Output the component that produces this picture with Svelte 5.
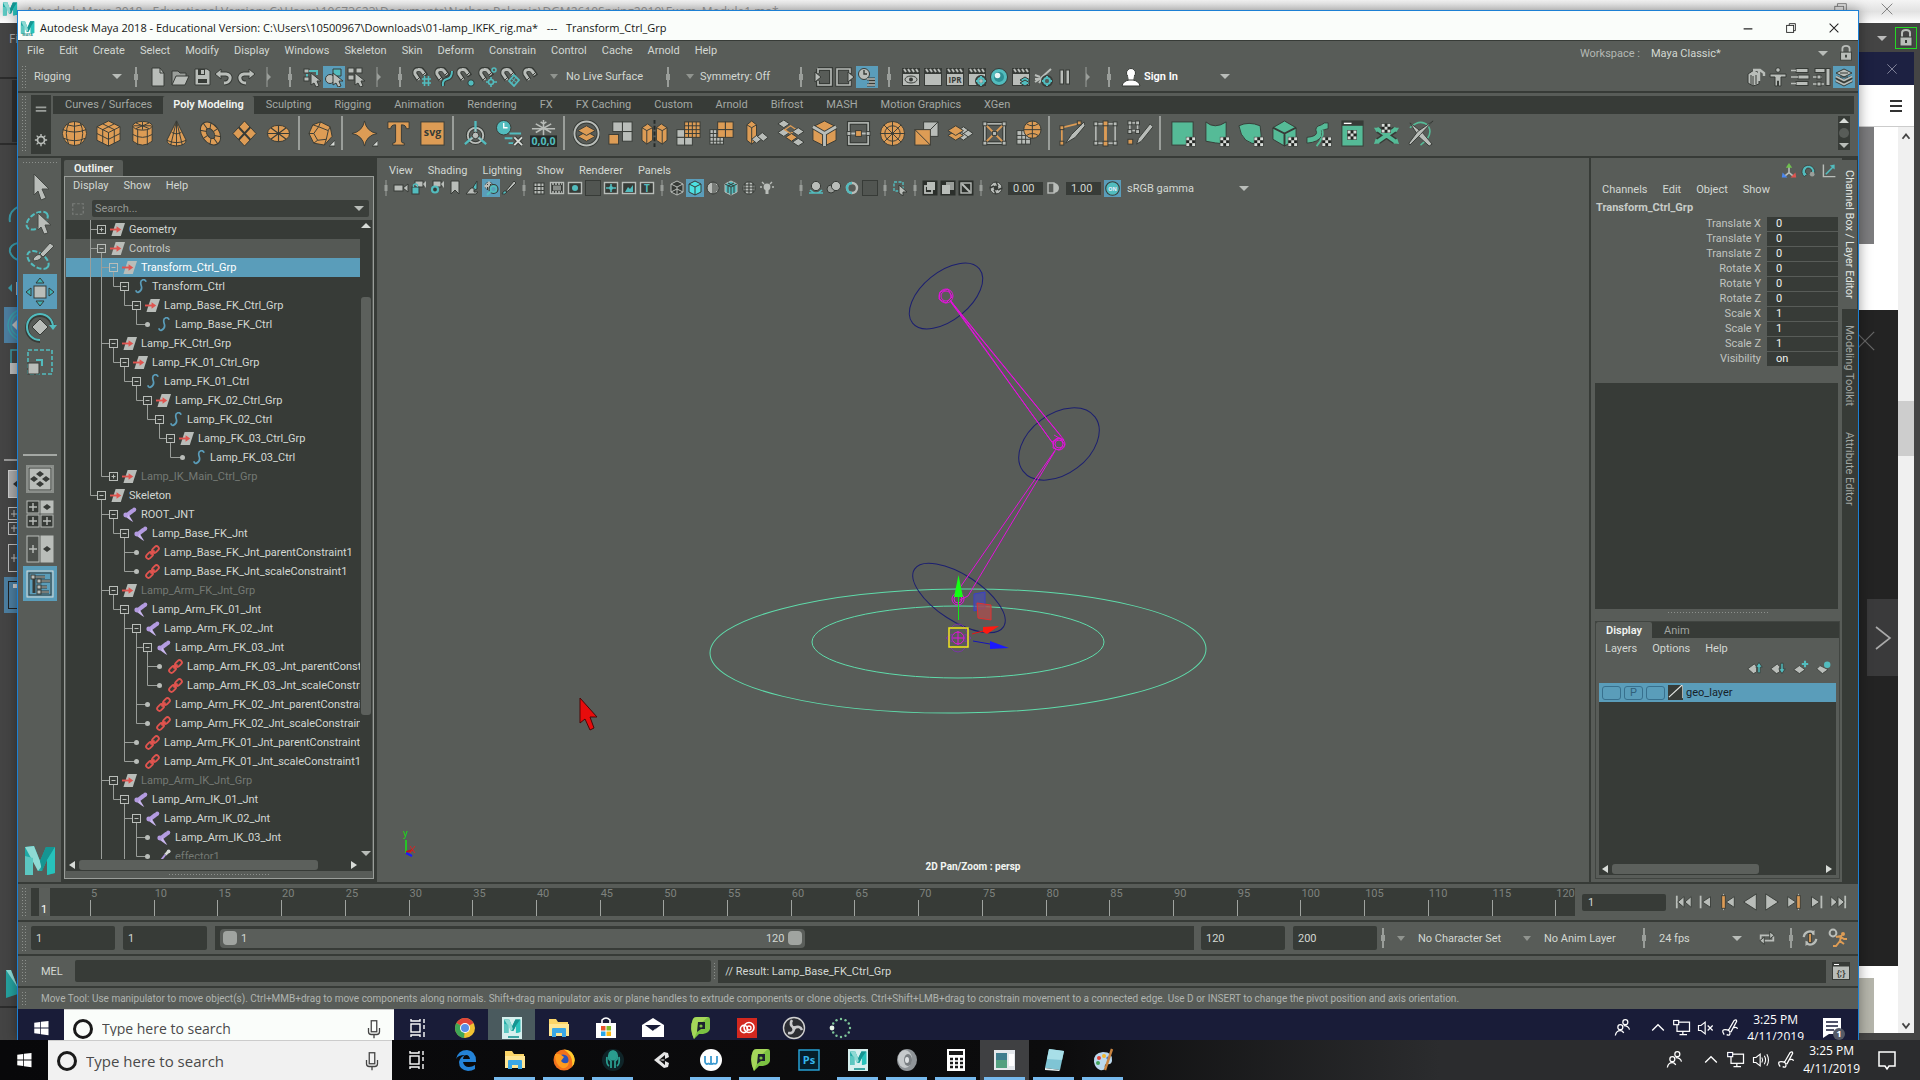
<script>
  const G = '#b9bdb9', T = '#52bcbe', O = '#dd9c55', D = '#373b37', M = '#9a9e9a', U = '#55bb97', B = '#5a9dba', R = '#e0544f';

  const p = (d, f = 'none', s = 'none', w = 1) => `<path d="${d}" fill="${f}" stroke="${s}" stroke-width="${w}"/>`;
  const c = (x, y, r, f = 'none', s = 'none', w = 1) => `<circle cx="${x}" cy="${y}" r="${r}" fill="${f}" stroke="${s}" stroke-width="${w}"/>`;
  const e = (x, y, a, b, f = 'none', s = 'none', w = 1) => `<ellipse cx="${x}" cy="${y}" rx="${a}" ry="${b}" fill="${f}" stroke="${s}" stroke-width="${w}"/>`;
  const r = (x, y, w, h, f = 'none', s = 'none', sw = 1) => `<rect x="${x}" y="${y}" width="${w}" height="${h}" fill="${f}" stroke="${s}" stroke-width="${sw}"/>`;
  const t = (x, y, size, f, txt) => `<text x="${x}" y="${y}" font-size="${size}" fill="${f}" font-weight="700" text-anchor="middle" font-family="Open Sans, sans-serif">${txt}</text>`;

  const magnet = p('M7 13L3 7Q2 2 7 2Q9 2 10 3L14 9', 'none', D, 5) + p('M7 13L3 7Q2 3 6 2.5Q9 2 10 4L13 8', 'none', G, 3) + p('M11 8L14 5M5 13L8 10', 'none', D, 1);
  const pointer = p('M9 6L19 14H15L17 19L14 20L12 16L9 18Z', G, D);
  const clap = r(1.5, 6.5, 17, 12, G, D) + r(1.5, 1.5, 17, 5, D, D) + p('M3 2L5 5M7 2L9 5M11 2L13 5M15 2L17 5', 'none', G, 2);
  const gear = (x, y, q) => c(x, y, q + 1, 'none', D, 4) + c(x, y, q, 'none', T, 2) + p(`M${x} ${y - q - 2}V${y - q}M${x} ${y + q}V${y + q + 2}M${x - q - 2} ${y}H${x - q}M${x + q} ${y}H${x + q + 2}`, 'none', T, 2);

  /* 20-unit icons of the status line */
  const status = {
    sep: p('M10 0V20', 'none', M, 2) + r(8, 7, 4, 6, M),
    end: p('M9 0V20', 'none', M, 1) + p('M9 6L13 10L9 14Z', M),
    file: p('M4 1H12L16 6V19H4Z', G, D) + p('M12 1V6H16', 'none', D),
    open: p('M2 18V4H8L10 6H16V9', M, D) + p('M2 18L6 9H19L15 18Z', G, D),
    save: p('M3 2H15L18 4V18H3Z', G, D) + r(6, 2, 7, 6, D) + r(9, 3, 3, 4, G) + r(6, 12, 9, 4, D),
    undo: p('M4 7H12Q17 8 16 12Q15 16 10 16', 'none', D, 5) + p('M7 2V12L1 7Z', G, D) + p('M5 7H12Q17 8 16 12Q15 16 10 16', 'none', G, 3),
    redo: p('M16 7H8Q3 8 4 12Q5 16 10 16', 'none', D, 5) + p('M13 2V12L19 7Z', G, D) + p('M15 7H8Q3 8 4 12Q5 16 10 16', 'none', G, 3),
    selH: r(2, 2, 5, 4, G, D) + p('M7 4H15V8M5 7V12', 'none', T, 2) + r(2, 10, 5, 4, G, D) + pointer,
    selO: p('M9 2H17V9H9Z', T, D) + c(6, 12, 4.5, G, D) + pointer,
    selC: r(2, 1, 6, 5, G, D) + r(10, 1, 6, 5, G, D) + r(2, 8, 6, 5, G, D) + pointer,
    mGrid: magnet + p('M10 12H19M10 16H19M12.5 9V19M16.5 9V19', 'none', T, 1.6),
    mCurve: magnet + p('M9 19Q8 13 13 12Q18 11 18 4', 'none', D, 4) + p('M9 19Q8 13 13 12Q18 11 18 4', 'none', T, 2),
    mPoint: magnet + c(15, 16, 3.2, T, D),
    mProj: magnet + c(16, 3, 2, 'none', T, 1.5) + c(13, 15, 2.5, 'none', T, 1.6) + p('M13 10V12M13 18V20M8 15H10M16 15H19', 'none', T, 1.6),
    mPlane: magnet + p('M9 14L14 8L19 13L14 19Z', 'none', T, 1.8) + p('M11 11L17 16M16 10L11 17', 'none', T, 1),
    mLive: magnet,
    in: p('M5 2H18V18H5V14M5 2V6', 'none', D, 4) + p('M5 6V2H18V18H5V14', 'none', G, 1.6) + p('M2 5V15L8 10Z', G, D),
    out: p('M2 2H15V18H2Z', 'none', D, 3.4) + p('M15 6V2H2V18H15V14', 'none', G, 1.6) + p('M13 5V15L19 10Z', G, D),
    hist: c(7, 7, 5.5, G, D) + p('M7 3V7H10', 'none', D, 1.4) + p('M10 12H18M12 15H18M10 18H18', 'none', D, 3) + p('M10 12H18M12 15H18M10 18H18', 'none', G, 1.5),
    rEye: clap + e(10, 12.5, 6, 3.5, G, D) + c(10, 12.5, 2, D),
    rPic: clap,
    rIpr: clap + t(10, 16, 8, D, 'IPR'),
    rSet: clap + gear(14, 14, 3),
    rHyp: c(10, 10, 8.5, T, D) + c(10, 10, 5, '#2e8f94') + c(8.5, 8.5, 2.8, '#e6f4f4'),
    rLayer: clap + p('M9 13L14 10L19 13L14 16Z', T, D) + p('M9 16L14 13L19 16L14 19Z', T, D),
    rLight: p('M2 15L8 11L18 2M2 8L7 10M6 16L9 12M2 12H7', 'none', G, 2) + gear(14, 14, 3),
    pause: r(5, 3, 3.5, 14, G, D) + r(11, 3, 3.5, 14, G, D),
    user: c(10, 6, 4.5, '#fff', D) + p('M7 9H13L12 14H8Z', '#fff') + p('M1 19Q2 14 8 13H12Q18 14 19 19Z', '#fff', D),
    wModel: p('M2 7L8 3L13 6V17L7 19L2 16Z', G, D) + p('M7 9V19M5 8V18M10 8V17', 'none', D) + p('M7 3H14L18 6V9M13 4V14', 'none', G, 2.4),
    wHuman: c(10, 3, 2.3, G, D) + p('M2 7H18V10H13V19H10.5V14H9.5V19H7V10H2Z', G, D),
    wChar: r(6, 1.5, 12, 4, G, D) + r(8, 8, 11, 4, G, D) + r(6, 14.5, 12, 4, G, D) + p('M1 3.5H6M1 10H8M1 16.5H6', 'none', G, 1.5),
    wTool: r(3, 1.5, 10, 4, G, D) + r(14, 1.5, 4, 17, G, D) + p('M1 10H10M1 17H12', 'none', G, 1.6) + r(5, 8, 4, 4, G, D) + r(5, 15, 4, 4, G, D),
    wLayer: p('M2 6L10 2L18 6L10 10Z', G, D) + p('M2 10L10 14L18 10M2 13.5L10 17.5L18 13.5', 'none', D, 3.4) + p('M2 9.5L10 13.5L18 9.5M2 13.5L10 17.5L18 13.5', 'none', G, 1.8) + p('M6 6H14M6 10H14', 'none', D, 1),
    lock: p('M6 9V5Q6 2 10 2Q14 2 14 5V9', 'none', G, 2) + r(4, 9, 12, 9, G, D) + p('M10 12V15', 'none', D, 2)
  };

  const checker = (x, y) => r(x, y, 9, 9, '#1f221f', D) + [[0, 0], [6, 0], [3, 3], [0, 6], [6, 6]].map(([a, b]) => r(x + a, y + b, 3, 3, '#d8dcd8')).join('');
  const fly = p('M28 21V27H22Z', '#d8dcd8', D);
  /* 28-unit icons of the shelf */
  const shelf = {
    sphere: c(14, 14, 12.5, O, D) + p('M14 1.5V26.5M2 10Q14 15 26 10M3 19Q14 24 25 19M8 3Q3 14 8 25M20 3Q25 14 20 25M6 5Q14 8 22 5', 'none', D),
    cube: p('M14 1L26 7V21L14 27L2 21V7Z', O, D) + p('M2 7L14 13L26 7M14 13V27M8 4L20 10V24M20 4L8 10V24M2 14L14 20L26 14', 'none', D),
    cylinder: p('M4 6V22Q14 30 24 22V6', O, D) + e(14, 6, 10, 4.5, O, D) + p('M4 15Q14 21 24 15M9 10V26M19 10V26M14 2V10M5 6H23M7 3L21 9M21 3L7 9', 'none', D),
    cone: p('M14 1L24 21Q24 26 14 27Q4 26 4 21Z', O, D) + p('M14 1V27M14 1L8 26M14 1L20 26M9 13Q14 16 19 13M4 21Q14 26 24 21', 'none', D),
    torus: `<g transform="rotate(55 14 14)">${e(14, 14, 13, 9, O, D)}${e(14, 14, 6, 3.5, '#585c58', D)}${p('M14 5V10M14 18V23M1 14H8M20 14H27M5 7L10 12M23 7L18 12M5 21L10 16M23 21L18 16', 'none', D)}</g>`,
    plane: p('M14 1L26 14L14 27L2 14Z', O, D) + p('M8 7.5L20 20.5M20 7.5L8 20.5', 'none', D, 2),
    disc: e(14, 14, 11.5, 8.5, O, D) + p('M14 5.5V22.5M2.5 14H25.5M6 8L22 20M22 8L6 20', 'none', D, 1.2),
    platonic: p('M13 2L23 7L25 17L17 26L6 24L1 14L5 5Z', O, D) + p('M13 2L11 7L5 5M11 7L6 14L1 14M6 14L10 21L6 24M10 21L19 20L17 26M19 20L21 11L23 7M21 11L11 7', 'none', D) + fly,
    star: p('M14 1Q16 12 27 14Q16 16 14 27Q12 16 1 14Q12 12 14 1Z', O, D) + fly,
    type: p('M3 2H25V9H22Q22 5 17 5V22Q17 24 20 24V26H8V24Q11 24 11 22V5Q6 5 6 9H3Z', O, D),
    svg: r(2, 2, 24, 24, O, D) + t(14, 17, 11, D, 'svg'),
    axis: c(14, 16, 8, 'none', D, 4) + c(14, 16, 8, 'none', G, 2) + p('M14 13V1M11 18L3 25M17 18L25 25', 'none', T, 2.4) + p('M14 9V16L8 21M14 16L20 21', 'none', G, 1.6) + c(14, 16, 3.4, G, D),
    clock: c(8, 8, 7.5, T, D) + p('M8 3V8H12', 'none', '#fff', 1.4) + p('M14 14H26M9 19H17M13 24H18', 'none', T, 2) + p('M19 18L27 26M27 18L19 26', 'none', D, 4) + p('M19 18L27 26M27 18L19 26', 'none', '#d8dcd8', 2),
    freeze: p('M14 0V16M6 4L22 13M22 4L6 13M2 9H26M11 2L14 4L17 2', 'none', G, 1.6) + r(0, 16, 28, 12, '#262a28') + t(14, 26, 11, T, '0,0,0'),
    combine: c(14, 14, 12.5, 'none', D, 4) + c(14, 14, 12.5, 'none', G, 2) + p('M5 17L14 12L23 17L14 22Z', O, D) + p('M5 11L14 6L23 11L14 16Z', O, D),
    separate: r(6, 2, 10, 10, G, D) + r(16, 2, 10, 10, G, D) + r(16, 12, 10, 10, G, D) + r(2, 15, 10, 10, O, D),
    mirror: p('M1 8L7 4L12 8V21L6 25L1 21Z', O, D) + p('M27 8L21 4L16 8V21L22 25L27 21Z', O, D) + p('M1 8L6 11L12 8M6 11V25M16 8L22 11L27 8M22 11V25', 'none', D) + `<path d="M14 0V28" stroke="#262a28" stroke-width="2" stroke-dasharray="4 2"/>`,
    smooth: r(2, 10, 8, 8, G, D) + r(2, 18, 8, 8, G, D) + r(10, 18, 8, 8, G, D) + r(10, 2, 16, 16, O, D) + p('M14 2V18M18 2V18M22 2V18M10 6H26M10 10H26M10 14H26', 'none', D),
    reduce: r(1, 10, 14, 15, G, D) + p('M4.5 10V25M8 10V25M11.5 10V25M1 14H15M1 18H15M1 22H15', 'none', D) + r(9, 2, 8, 8, O, D) + r(17, 2, 8, 8, O, D) + r(17, 10, 8, 8, O, D) + r(9, 10, 8, 8, O, D),
    extrude: p('M4 5L9 1L14 5V21L9 25L4 21Z', O, D) + p('M4 5L9 8L14 5M9 8V25', 'none', D) + p('M14 16L19 20L14 24L9 20Z', G, D) + p('M20 13L26 18L21 22L15 17Z', G, D),
    bridge: p('M7 0L13 4L7 8L1 4Z', G, D) + p('M7 9L13 13L7 17L1 13Z', G, D) + p('M14 6L20 10L14 14L8 10Z', 'none', O, 1.4) + p('M22 8L28 12L22 16L16 12Z', G, D) + p('M15 14L21 18L15 22L9 18Z', O, D) + p('M22 19L28 23L22 27L16 23Z', G, D),
    bevel: p('M14 1L26 7V21L14 27L2 21V7Z', O, D) + p('M2 7L14 14L26 7M14 14V27', 'none', D, 5) + p('M2 7L14 14L26 7M14 14V27', 'none', G, 3),
    target: r(4, 3, 20, 22, 'none', D, 4) + r(4, 3, 20, 22, 'none', G, 1.6) + p('M2 14H26', 'none', G, 2) + r(11, 11, 6, 6, O, D) + r(2, 12, 4, 4, G, D) + r(22, 12, 4, 4, G, D),
    circle: c(14, 14, 12.5, O, D) + c(14, 14, 8, 'none', D) + p('M14 1V27M1 14H27M5 5L23 23M23 5L5 23', 'none', D),
    fill: p('M11 2H26V17H11Z', G, D) + p('M26 2L11 17', 'none', D) + r(2, 10, 16, 16, O, D) + p('M2 10L18 26', 'none', D),
    poke: p('M17 7L27 14L17 21L7 14Z', G, D) + p('M12 10.5L22 17.5M22 10.5L12 17.5', 'none', D) + p('M9 11L17 16L9 21L1 16Z', O, D) + p('M9 6L17 11L9 16L1 11Z', O, D),
    lattice: r(4, 4, 20, 20, 'none', D, 4) + r(4, 4, 20, 20, 'none', G, 1.6) + p('M4 4L24 24M24 4L4 24', 'none', O, 2) + [[4, 4], [24, 4], [4, 24], [24, 24], [14, 14]].map(([x, y]) => r(x - 2, y - 2, 4, 4, G, D)).join(''),
    sculpt: r(2, 11, 14, 14, G, D) + p('M7 11V25M11 11V25M2 16H16M2 20H16', 'none', D) + c(18, 10, 9, O, D) + p('M18 1V19M9 10H27M12 4Q18 8 24 4M12 16Q18 12 24 16', 'none', D),
    knife: p('M4 25L4 8L24 3', 'none', O, 1.8) + p('M27 2L14 15L8 24L18 18L28 6Z', G, D) + r(2, 6, 4, 4, O, D) + r(2, 22, 4, 4, O, D) + r(20, 1, 4, 4, O, D),
    loop: r(4, 4, 20, 20, 'none', G, 1.6) + p('M14 2V26', 'none', O, 3) + [[4, 4], [24, 4], [4, 24], [24, 24]].map(([x, y]) => r(x - 2, y - 2, 4, 4, G, D)).join('') + r(11.5, 1, 5, 5, O, D) + r(11.5, 22, 5, 5, O, D),
    quad: r(4, 3, 8, 8, 'none', G, 1.6) + [[4, 3], [12, 3], [4, 12], [12, 12]].map(([x, y]) => r(x - 2, y - 2, 4, 4, G, D)).join('') + r(2, 20, 5, 5, O, D) + p('M25 4L28 7L16 22L11 25L13 19Z', G, D),
    uvA: r(3, 2, 22, 24, U, D) + checker(18, 18),
    uvB: p('M3 2Q12 10 24 2V25Q12 24 3 22Z', U, D) + checker(18, 18),
    uvC: p('M2 6Q12 1 24 6Q26 16 24 25Q5 26 2 6Z', U, D) + checker(18, 18),
    uvD: p('M14 1L26 8V20L14 27L2 20V8Z', U, D) + p('M2 8L14 14L26 8M14 14V27', 'none', D, 2) + checker(18, 18),
    uvE: p('M17 5Q9 7 12 13Q12 17 2 18V24Q14 23 17 17Q18 12 17 11Q20 10 24 9V3Q20 2 17 5Z', U, D) + p('M18 10Q20 18 12 27', 'none', U, 2) + checker(18, 18),
    uvF: r(3, 1, 22, 26, U, D) + r(3, 1, 22, 5, D) + p('M5 3.5H13', 'none', '#fff', 1.4) + checker(9, 11),
    uvG: p('M5 10L23 22M23 10L5 22', 'none', D, 7) + p('M4 9L24 23M24 9L4 23', 'none', U, 4) + p('M1 8L7 8L4 13ZM27 8L21 8L24 13ZM1 25L3 19L7 24ZM27 25L25 19L21 24Z', U) + checker(9, 4),
    uvH: p('M3 8Q14 -2 22 6Q28 16 14 26', 'none', U, 1.6) + p('M3 3L16 13L26 25L23 27L12 17Z', G, D) + p('M27 1L14 15L3 26L2 24L11 12Z', G, D)
  };
  const shelfGroups = [
    ['sphere', 'cube', 'cylinder', 'cone', 'torus', 'plane', 'disc'],
    ['platonic'],
    ['star', 'type', 'svg'],
    ['axis', 'clock', 'freeze'],
    ['combine', 'separate', 'mirror', 'smooth', 'reduce', 'extrude', 'bridge', 'bevel', 'target', 'circle', 'fill', 'poke', 'lattice', 'sculpt'],
    ['knife', 'loop', 'quad'],
    ['uvA', 'uvB', 'uvC', 'uvD', 'uvE', 'uvF', 'uvG', 'uvH']
  ];

  const cam = r(1, 5, 9, 6, G, D) + p('M10 8L15 4V12Z', G, D);
  const frame = r(1.5, 2.5, 13, 11, D, G, 1.4);
  /* 16-unit icons of the view panel */
  const panel = {
    sep: p('M8 0V16', 'none', M, 1) + r(6.5, 5, 3, 6, M),
    cam,
    camLock: r(4, 1, 8, 6, G, D) + p('M12 4L15 1V8Z', G) + r(1, 7, 7, 7, T, D) + p('M2.5 7V5Q4.5 3 6.5 5V7', 'none', T, 1.4),
    camGear: r(4, 1, 8, 6, G, D) + p('M12 4L15 1V8Z', G) + c(6, 9.5, 3, D, T, 2.2),
    mark: p('M4 1H12V14L8 10L4 14Z', G, D),
    image: p('M5 12L12 1V9Z', T, D) + p('M1 14L6 8H9V12H13L11 14Z', G, D),
    pan: p('M6 2V10M2 6H10', 'none', D, 4.5) + p('M6 1L9 4H3ZM1 6L4 3V9ZM11 6L8 3V9Z', G) + p('M6 2V10M2 6H10', 'none', G, 2) + c(10.5, 9, 3.6, B, D, 3) + c(10.5, 9, 3, B, T, 1.8) + p('M8 11L4 15', 'none', T, 2),
    pencil: p('M13 1L15 3L7 11L4 12Z', G, D) + p('M1 14Q3 9 6 12Q4 15 1 14Z', T, D),
    grid: r(3, 3, 10, 11, G, D) + p('M6 3V14M10 3V14M3 6.5H13M3 10.5H13', 'none', D, 1),
    film: r(1.5, 2.5, 13, 11, D, G, 1.4) + r(4, 5.5, 8, 5, '#888c88') + `<path d="M3 4H13M3 12H13" stroke="${G}" stroke-width="1.4" stroke-dasharray="2 1"/>`,
    gate: frame + c(8, 8, 3, T),
    blank: r(0.5, 0.5, 15, 15, '#515551', D),
    chart: frame + p('M3 8H13M8 4V12', 'none', T, 1.6) + c(8, 8, 2, T),
    safe: frame + p('M4 12L7 7L9 9L12 5V12Z', T),
    text: frame + t(8, 12, 10, T, 'T'),
    wire: p('M8 1L14 4V12L8 15L2 12V4Z', D, G) + p('M2 4L8 7L14 4M8 7V15M2 12L8 9L14 12', 'none', G),
    shade: p('M8 1L14 4V12L8 15L2 12V4Z', '#4de0e2', D) + p('M2 4L8 7L14 4M8 7V15', 'none', D),
    half: c(8, 8, 6, G, D) + p('M8 2V14M10 3V13M12 5V11', 'none', D),
    tex: p('M8 1L14 4V12L8 15L2 12V4Z', T, G) + p('M2 4L8 7L14 4M8 7V15M5 3L11 6V13M11 3L5 6V13', 'none', D),
    dots: c(8, 8, 6.2, G, D) + p('M4 3V13M8 2V14M12 3V13M3 5H13M2 8H14M3 11H13', 'none', D, 1.1),
    bulb: c(8, 7, 3.4, G) + r(6.5, 10, 3, 4, G) + p('M1 7H3M13 7H15M3 2L5 4M13 2L11 4', 'none', G, 1.4),
    ball: c(8, 6, 4.6, G, D) + p('M2 10Q8 16 14 10M1 13H15', 'none', T, 1.6),
    balls: c(5, 9, 4, M, D) + c(10, 6, 4.6, G, D),
    ring: c(8, 8, 5, 'none', G, 2.4) + p('M8 3A5 5 0 0 0 8 13', 'none', T, 2.4),
    iso: `<rect x="2" y="2" width="9" height="9" fill="none" stroke="${T}" stroke-width="1.4" stroke-dasharray="3 1.5"/>` + p('M7 5L15 12H11L11 16L7 13Z', G, D),
    xray: r(0.5, 0.5, 15, 15, '#2b2f2b') + r(5, 2, 8, 8, G) + r(3, 6, 7, 7, 'none', G, 1.8),
    xrayJ: r(0.5, 0.5, 15, 15, '#2b2f2b') + r(6, 2, 8, 8, M) + r(2, 5, 8, 9, G),
    xrayB: r(0.5, 0.5, 15, 15, '#2b2f2b') + r(3, 3, 10, 10, 'none', G, 1.4) + p('M4 4L12 12', 'none', G, 2),
    aperture: c(8, 8, 6, G, D) + c(8, 8, 2.4, D) + p('M8 2L10 6M14 8L10 10M8 14L6 10M2 8L6 6', 'none', D, 1.4),
    contrast: r(2, 3, 6, 10, 'none', G, 1.4) + p('M8 3A5 5 0 0 1 8 13Z', G),
    on: r(0, 0, 16, 16, B) + c(8, 8, 6.4, T, D) + t(8, 10, 5, '#eef', 'ON')
  };
  const panelRow = ['cam', 'camLock', 'camGear', 'mark', 'image', 'pan', 'pencil', 'sep', 'grid', 'film', 'gate', 'blank', 'chart', 'safe', 'text', 'sep', 'wire', 'shade', 'half', 'tex', 'dots', 'bulb', 'gap', 'sep', 'ball', 'balls', 'ring', 'blank', 'sep', 'iso', 'sep', 'xray', 'xrayJ', 'xrayB', 'sep', 'aperture'];

  const mLogo = p('M2 3L11 2L17 17L23 3L32 3V29L24 31V16L19 27H15L10 14L10 31H2Z', '#1fa9a5') + p('M2 3L11 2L19 22L15 27Z', '#8fdad4') + p('M23 3L32 3L24 16L19 27L17 17Z', '#159592') + p('M24 16L32 3V29L24 31Z', '#27c2bb') + p('M2 31V12L10 14V31Z', '#5cc7c1');
  /* 34-unit icons of the tool box */
  const tools = {
    select: p('M11 4L26 19H19L23 28L18 30L15 21L11 25Z', G, '#444844'),
    lasso: `<g transform="rotate(-35 15 15)"><ellipse cx="14" cy="15" rx="12" ry="7" fill="none" stroke="${T}" stroke-width="2" stroke-dasharray="5 2"/></g>` + p('M15 8L28 20H22L25 28L21 29L18 22L15 25Z', G, '#444844'),
    paint: `<g transform="rotate(35 15 20)"><ellipse cx="15" cy="20" rx="12" ry="7" fill="none" stroke="${T}" stroke-width="2" stroke-dasharray="5 2"/></g>` + p('M27 3L31 6L20 17L17 14Z', G, '#444844') + p('M10 19Q14 13 18 15Q20 20 11 21Z', G, '#444844'),
    move: r(11, 11, 12, 12, G, D) + p('M17 3L21 8H13ZM17 31L21 26H13ZM3 17L8 13V21ZM31 17L26 13V21Z', '#3fb3b6', D),
    rotate: p('M17 31A13 13 0 1 1 30 18', 'none', D, 4) + p('M17 30A13 13 0 1 1 30 17', 'none', T, 2) + p('M26 15H34L30 20Z', T) + p('M17 9L25 17L17 25L9 17Z', G, D),
    scale: `<rect x="5" y="5" width="24" height="24" fill="none" stroke="${T}" stroke-width="1.6" stroke-dasharray="4 2"/>` + r(5, 18, 11, 11, G, D) + p('M13 15H19V21', 'none', T, 2),
    one: r(4, 4, 26, 26, G, '#8a8e8a', 2) + r(6, 6, 22, 22, 'none', D) + p('M17 9L21 12L17 15L13 12ZM17 19L21 22L17 25L13 22ZM11 14L15 17L11 20L7 17ZM23 14L27 17L23 20L19 17Z', D),
    four: r(4, 4, 12, 12, D, G) + r(18, 4, 12, 12, G, G) + r(4, 18, 12, 12, D, G) + r(18, 18, 12, 12, D, G) + p('M10 6V14M6 10H14M10 20V28M6 24H14M24 20V28M20 24H28', 'none', G, 1.4) + p('M24 7L28 10L24 13L20 10Z', D),
    two: r(4, 4, 12, 26, '#4c504c', G) + r(18, 4, 12, 26, G, G) + p('M10 13V21M6 17H14', 'none', G, 1.4) + p('M24 14L28 17L24 20L20 17Z', D),
    outl: r(4, 4, 26, 26, B, '#d8dcd8', 1) + r(6, 6, 22, 22, 'none', D) + p('M11 10V26M11 10H22M16 14H27M16 20H24M16 25H26', 'none', D, 3) + p('M11 10H22M16 14H27M16 20H24M16 25H26', 'none', G, 1) + r(8, 8, 4, 4, G, D) + r(14, 12, 4, 4, G, D) + r(14, 18, 4, 4, G, D) + r(14, 23, 4, 4, G, D)
  };

  /* 16-unit icons of outliner rows */
  const kinds = {
    grp: p('M6 1H16L11.500 15H1.500Z', G) + p('M0 8H9', 'none', R, 2) + p('M7 4.500L12 8L7 11.500Z', R),
    crv: p('M14 3Q13 0 10 1Q7 2 9 8Q10 12 6 14Q4 15 3 12', 'none', B, 1.8),
    jnt: p('M10 2L15 4L7 10L4 7Z', '#b39be0') + p('M2 9L7 8L12 16L10 15Z', '#c9b6ee') + c(13, 2.6, 2.2, '#b39be0') + c(4, 8.5, 2.6, '#b39be0'),
    con: `<g transform="rotate(-45 8 8)" fill="none" stroke="${R}" stroke-width="2"><rect x="-.5" y="5.500" width="8" height="5" rx="2.500"/><rect x="8.500" y="5.500" width="8" height="5" rx="2.500"/><path d="M5 8H11"/></g>`,
    eff: p('M10 6L14 2', 'none', '#d8dcd8', 3) + c(13.5, 2.5, 2, '#d8dcd8') + p('M3 15L10 6', 'none', '#b39be0', 2)
  };

  const rows = [
    [0, '+', 'grp', 'Geometry'], [0, '-', 'grp', 'Controls', 'hover'], [1, '-', 'grp', 'Transform_Ctrl_Grp', 'sel'],
    [2, '-', 'crv', 'Transform_Ctrl'], [3, '-', 'grp', 'Lamp_Base_FK_Ctrl_Grp'], [4, '', 'crv', 'Lamp_Base_FK_Ctrl'],
    [1, '-', 'grp', 'Lamp_FK_Ctrl_Grp'], [2, '-', 'grp', 'Lamp_FK_01_Ctrl_Grp'], [3, '-', 'crv', 'Lamp_FK_01_Ctrl'],
    [4, '-', 'grp', 'Lamp_FK_02_Ctrl_Grp'], [5, '-', 'crv', 'Lamp_FK_02_Ctrl'], [6, '-', 'grp', 'Lamp_FK_03_Ctrl_Grp'],
    [7, '', 'crv', 'Lamp_FK_03_Ctrl'], [1, '+', 'grp', 'Lamp_IK_Main_Ctrl_Grp', 'dim'], [0, '-', 'grp', 'Skeleton'],
    [1, '-', 'jnt', 'ROOT_JNT'], [2, '-', 'jnt', 'Lamp_Base_FK_Jnt'], [3, '', 'con', 'Lamp_Base_FK_Jnt_parentConstraint1'],
    [3, '', 'con', 'Lamp_Base_FK_Jnt_scaleConstraint1'], [1, '-', 'grp', 'Lamp_Arm_FK_Jnt_Grp', 'dim'],
    [2, '-', 'jnt', 'Lamp_Arm_FK_01_Jnt'], [3, '-', 'jnt', 'Lamp_Arm_FK_02_Jnt'], [4, '-', 'jnt', 'Lamp_Arm_FK_03_Jnt'],
    [5, '', 'con', 'Lamp_Arm_FK_03_Jnt_parentConstraint1'], [5, '', 'con', 'Lamp_Arm_FK_03_Jnt_scaleConstraint1'],
    [4, '', 'con', 'Lamp_Arm_FK_02_Jnt_parentConstraint1'], [4, '', 'con', 'Lamp_Arm_FK_02_Jnt_scaleConstraint1'],
    [3, '', 'con', 'Lamp_Arm_FK_01_Jnt_parentConstraint1'], [3, '', 'con', 'Lamp_Arm_FK_01_Jnt_scaleConstraint1'],
    [1, '-', 'grp', 'Lamp_Arm_IK_Jnt_Grp', 'dim'], [2, '-', 'jnt', 'Lamp_Arm_IK_01_Jnt'], [3, '-', 'jnt', 'Lamp_Arm_IK_02_Jnt'],
    [4, '', 'jnt', 'Lamp_Arm_IK_03_Jnt'], [4, '', 'eff', 'effector1', 'dim']
  ];
  /* levels whose branch goes on below the visible rows */
  const openBelow = [1, 3];
  const lx = (level) => Math.round(36 + level * 11.5) - 0.5;
  function continues(i, level) {
    for (let j = i + 1; j < rows.length; j++) {
      if (rows[j][0] === level) return true;
      if (rows[j][0] < level) return false;
    }
    return openBelow.includes(level);
  }
  function gutter(i) {
    const [d, box] = rows[i];
    let s = '';
    for (let a = 0; a < d; a++) if (continues(i, a)) s += p(`M${lx(a - 1)} 0V19`, 'none', M);
    s += p(`M${lx(d - 1)} 0V${continues(i, d) ? 19 : 9.5}M${lx(d - 1)} 9.5H${lx(d) - (box ? 4 : 0)}`, 'none', M);
    if (box === '-') s += p(`M${lx(d)} 14V19`, 'none', M);
    if (box) s += r(lx(d) - 4, 5.5, 8, 8, 'none', G) + p(`M${lx(d) - 2} 9.5H${lx(d) + 2}` + (box === '+' ? `M${lx(d)} 7.5V11.5` : ''), 'none', G);
    else s += c(lx(d), 9.5, 2.5, G);
    return s;
  }

  const menus = ['File', 'Edit', 'Create', 'Select', 'Modify', 'Display', 'Windows', 'Skeleton', 'Skin', 'Deform', 'Constrain', 'Control', 'Cache', 'Arnold', 'Help'];
  const shelves = ['Curves / Surfaces', 'Poly Modeling', 'Sculpting', 'Rigging', 'Animation', 'Rendering', 'FX', 'FX Caching', 'Custom', 'Arnold', 'Bifrost', 'MASH', 'Motion Graphics', 'XGen'];
  const attrs = [['Translate X', '0'], ['Translate Y', '0'], ['Translate Z', '0'], ['Rotate X', '0'], ['Rotate Y', '0'], ['Rotate Z', '0'], ['Scale X', '1'], ['Scale Y', '1'], ['Scale Z', '1'], ['Visibility', 'on']];
  const ticks = Array.from({ length: 24 }, (_, i) => (i + 1) * 5);

  const play = {
    first: p('M2 3V17', 'none', G, 2) + p('M10 4V16L3 10ZM18 4V16L11 10Z', G, D),
    back: p('M4 3V17', 'none', G, 2) + p('M15 4V16L6 10Z', G, D),
    keyBack: p('M5 1V19', 'none', G, 1) + r(3, 3, 4, 14, O, D) + p('M17 4V16L8 10Z', G, D),
    rev: p('M17 1V19L3 10Z', G, D),
    fwd: p('M3 1V19L17 10Z', G, D),
    keyNext: p('M15 1V19', 'none', G, 1) + r(13, 3, 4, 14, O, D) + p('M3 4V16L12 10Z', G, D),
    next: p('M16 3V17', 'none', G, 2) + p('M5 4V16L14 10Z', G, D),
    last: p('M18 3V17', 'none', G, 2) + p('M2 4V16L9 10ZM10 4V16L17 10Z', G, D)
  };
  const misc = {
    loop: p('M3 12V7H15M17 8V13H5', 'none', G, 2) + p('M13 3L18 7L13 11ZM7 9L2 13L7 17Z', G, D),
    auto: p('M3 9A7 7 0 0 1 14 4M17 11A7 7 0 0 1 6 16', 'none', G, 2.4) + p('M15 1V7L10 5ZM5 19V13L10 15Z', G) + r(8.5, 5, 3, 10, O, D),
    run: c(5, 5, 3.4, 'none', G, 2) + c(15, 6, 2, O) + p('M8 9L13 8L12 13L16 16M13 9L16 11H19M12 13L8 18H5', 'none', O, 2),
    script: r(1.5, 1.5, 17, 17, G, D) + r(1.5, 1.5, 17, 4, D) + p('M3 3.5H8', 'none', '#fff', 1) + t(10, 15, 8, D, '{;}'),
    cbMove: p('M10 12V5M10 12L5 16M10 12L15 16', 'none', G, 2) + p('M10 0L14 6H6Z', '#6fc04f') + p('M2 12L8 18H1Z', '#4a87f0') + p('M18 12L12 18H19Z', R),
    cbRot: p('M4 17A8 8 0 1 1 16 15L13 12A4 4 0 1 0 8 14Z', T, D) + c(14, 14, 3, M),
    cbGraph: p('M3 2V17H18', 'none', G, 1.8) + p('M6 14L15 5', 'none', T, 2) + p('M17 2V8L11 3Z', T),
    lUp: p('M1 11L9 5L12 8V15L8 17Z', G, D) + p('M15 3L19 9H16.5V16H13.5V9H11Z', T, D),
    lDown: p('M1 11L9 5L12 8V15L8 17Z', G, D) + p('M15 17L19 11H16.5V4H13.5V11H11Z', T, D),
    lNew: p('M1 12L8 7L15 12L8 17Z', G, D) + p('M15 1V9M11 5H19', 'none', T, 2.6),
    lSel: p('M1 11L5 7L15 12L8 17Z', G, D) + c(14, 6, 4, T)
  };

  /* 24-unit icons of the task bars */
  const folder = p('M2 3H9L11 6H21V20H2Z', '#fbd568') + p('M2 8H22V20H2Z', '#ffe694') + p('M5 21V13Q5 12 6 12H18Q19 12 19 13V21H15V17H9V21Z', '#3ba7e6');
  const mayaIcon = r(2, 1, 20, 22, '#d6efee') + `<g transform="translate(3 2) scale(.54 .48)">${mLogo}</g>` + r(8, 20, 11, 2, '#3ba5a3');
  const pIcon = p('M5 3Q6 1 9 1H20Q22 1 22 4V13Q21 17 15 18H11L6 23Q1 12 5 3Z', '#7cc242') + p('M5 3Q6 1 9 1H20L12 8L6 23Q1 12 5 3Z', '#a5d65a') + p('M10 6H17V13H13L9 16Z', '#1d2230') + c(13, 10, 1.6, '#7cc242');
  const w = '#fff';
  const task = {
    win: p('M3 5L11 4V11.4H3ZM12 3.8L22 2.5V11.4H12ZM3 12.6H11V20L3 19ZM12 12.6H22V21.5L12 20.2Z', w),
    mic: r(9, 3, 6, 12, 'none', '#444', 1.4) + p('M6 11V15Q6 18 9 18H15Q18 18 18 15V11M12 18V22', 'none', '#444', 1.4),
    view: r(5, 8, 9, 8, 'none', w, 1.4) + p('M5 3V5H14V3M5 21V19H14V21M18 3V7M18 9V13M18 16V21', 'none', w, 1.4),
    chrome: c(12, 12, 10, '#f1c232') + p('M12 12L3.4 7A10 10 0 0 1 20.6 7Z', '#e0443a') + p('M12 12L3.4 7A10 10 0 0 0 11 22Z', '#3fa657') + c(12, 12, 5, w) + c(12, 12, 4, '#5a8de8'),
    maya: mayaIcon,
    folder,
    store: p('M8 8V4Q12 0 16 4V8', 'none', w, 1.6) + p('M2 7H22V22H2Z', w) + r(7, 10, 4.5, 4.5, '#e8532b') + r(12.5, 10, 4.5, 4.5, '#7fba2b') + r(7, 15.5, 4.5, 4.5, '#2aa6e8') + r(12.5, 15.5, 4.5, 4.5, '#fcb813'),
    mail: p('M1 9L12 2L23 9V21H1Z', w) + p('M4 9H20L12 15Z', '#191c38') + p('M12 15L15 12L12 17Z', w),
    pdf: pIcon,
    cc: r(2, 2, 20, 20, '#d3281f') + c(9, 13, 3.6, 'none', w, 1.6) + c(14, 11.5, 5, 'none', w, 1.6) + c(14, 12, 2, 'none', w, 1.4),
    obs: c(12, 12, 10.5, '#2c2d33', '#d0d0d0', 1.4) + `<g fill="none" stroke="#c8c8cc" stroke-width="2.6"><path d="M12 12Q7 9 10 4"/><path d="M12 12Q12 18 6 17"/><path d="M12 12Q18 9 20 14"/></g>` + c(12, 12, 2, '#c8c8cc'),
    spin: Array.from({ length: 12 }, (_, i) => c((12 + 9 * Math.cos(i * 0.524)).toFixed(1), (12 + 9 * Math.sin(i * 0.524)).toFixed(1), i === 6 ? 2.4 : 1.2, i === 6 ? '#e7f4e7' : '#7fc79a')).join(''),
    edge: p('M2 11Q4 2 13 2Q22 3 22 13V14H9Q10 19 15 19Q18 19 21 17V21Q18 23 14 23Q5 22 5 14Q6 9 11 7Q4 7 2 11ZM9 11H16Q15 7 12.5 7Q9.500 7 9 11Z', '#2483d8'),
    fox: c(12, 12, 10.5, '#f2711c') + p('M12 1.500A10.500 10.500 0 0 1 20 19Q22 8 12 1.500Z', '#ffcb2e') + c(11, 12, 5.500, '#2b52b8') + p('M3 6Q8 5 12 9L9 13Q12 17 17 14Q16 21 10 20Q3 17 3 6Z', '#ff9b1e'),
    kraken: c(12, 12, 11, '#0f2428') + p('M12 3Q17 4 16 11L14 13V20M12 3Q7 4 8 11L10 13V20M6 9Q5 16 8 18M18 9Q19 16 16 18', 'none', '#2a9d8f', 1.8) + e(12, 8, 4, 4.500, '#2a9d8f'),
    unity: p('M4 12L14 4L18 5L19 9L13 12L19 15L18 19L14 20Z', '#e6e6e6') + p('M9 12L15 7V11ZM9 12L15 17V13Z', '#111'),
    wacom: c(12, 12, 11, w) + p('M6 8V14Q7 17 9.500 15.500Q12 17 12 14V8M12 14Q12 17 14.500 15.500Q18 17 18 13V8', 'none', '#3c9ad0', 1.8),
    ps: r(2, 2, 20, 20, '#061e2b', '#29a9e0', 1.4) + t(12, 16, 11, '#35b5ee', 'Ps'),
    sphere: e(12, 12, 10, 11, '#8f9498') + e(10, 11, 7, 9, '#c6cacc') + e(13, 12, 4, 6, '#7b8084') + e(12, 12, 2, 3, '#dfe2e4'),
    calc: r(3, 1, 18, 22, w) + r(5, 3, 14, 4, '#1a1a1a') + p('M6 11H9M11 11H14M16 11H19M6 15H9M11 15H14M16 15H19M6 19H9M11 19H14M16 19H19', 'none', '#1a1a1a', 2.4),
    app: r(1, 2, 21, 20, '#e4e8ec') + r(3, 5, 11, 15, '#3f7d8e') + r(3, 12, 11, 8, '#52a07f') + r(16, 6, 5, 12, w),
    note: p('M7 1L22 3L18 22L3 20Z', '#7fc4d4') + p('M7 1L22 3L20 12L5 11Z', '#a8dfe8') + p('M3 20L18 22L17 23L3 22Z', '#e8f3f4'),
    paint: p('M3 14Q2 5 12 4Q22 4 21 13Q20 17 16 16Q13 16 14 20Q13 23 9 22Q4 20 3 14Z', '#bcd9ee') + c(8, 10, 2, '#e0443a') + c(13, 8, 2, '#f4b92d') + c(7, 15, 2, '#42a35a') + c(17, 10, 1.6, '#3b6fd0') + p('M21 1L14 22', 'none', '#c98440', 2.4),
    people: c(10, 11, 3, 'none', w, 1.5) + p('M4 21Q5 15 10 15Q13 15 14 18', 'none', w, 1.5) + c(16, 5, 3, 'none', w, 1.5) + p('M14 9Q20 9 21 14', 'none', w, 1.5),
    up: p('M5 15L12 8L19 15', 'none', w, 1.6),
    net: r(6, 5, 15, 11, 'none', w, 1.5) + p('M13 16V20M9 20H18', 'none', w, 1.5) + r(2, 3, 6, 5, '#191c38', w, 1.4),
    mute: p('M3 9H6L11 5V19L6 15H3Z', 'none', w, 1.4) + p('M14 9L20 15M20 9L14 15', 'none', w, 1.5),
    vol: p('M3 9H6L11 5V19L6 15H3Z', 'none', w, 1.4) + p('M13 9Q15 12 13 15M16 7Q19 12 16 17M19 5Q23 12 19 19', 'none', w, 1.3),
    pen: p('M5 20Q1 14 6 14Q12 14 12 18Q12 22 8 20M10 15L17 3Q20 1 20 4L13 17M15 12Q20 10 21 13', 'none', w, 1.5),
    notif: p('M4 4H20V18H14L12 21L10 18H4Z', 'none', w, 1.5),
    notifOn: p('M2 2H20V18H8L2 22Z', w) + p('M5 6H17M5 10H17M5 14H13', 'none', '#191c38', 1.4) + c(18, 18, 6, '#555a66') + t(18, 21, 9, w, '1')
  };
  const remoteApps = ['view', 'chrome', 'maya', 'folder', 'store', 'mail', 'pdf', 'cc', 'obs', 'spin'];
  const hostApps = [['view'], ['edge'], ['folder', 1], ['fox', 1], ['kraken', 1], ['unity'], ['wacom', 1], ['pdf', 1], ['ps'], ['maya', 1], ['sphere', 1], ['calc', 1], ['app', 2], ['note', 1], ['paint', 1]];
</script>

{#snippet ic(body, unit, size)}
  <svg width={size} height={size} viewBox="0 0 {unit} {unit}" aria-hidden="true">{@html body}</svg>
{/snippet}

{#snippet btns(names, set, unit, size)}
  {#each names as n}
    {#if n === 'sep' || n === 'end'}
      <span class="sep">{@render ic(set[n], unit, size)}</span>
    {:else if n === 'gap'}
      <span class="gap"></span>
    {:else}
      <button aria-label={n} class:on={n === 'selO' || n === 'hist' || n === 'wLayer' || n === 'pan' || n === 'shade' || n === 'move' || n === 'outl'}>{@render ic(set[n], unit, size)}</button>
    {/if}
  {/each}
{/snippet}

{#snippet menu(items)}
  {#each items as m}<button>{m}</button>{/each}
{/snippet}

<div class="screen">
  <div class="desktop">
    <section class="backwin" aria-label="Maya window behind">
      <header>
        {@render ic(mLogo, 34, 16)}
        <span class="name">Autodesk Maya 2018 - Educational Version: C:\Users\10673623\Documents\Nathan Palomia\DGM2610Spring2019\Exam_Module1.ma*</span>
        <button aria-label="Restore">{@render ic(r(2, 6, 10, 10, 'none', '#777') + p('M5 6V3H15V13H12', 'none', '#777'), 18, 16)}</button>
        <button aria-label="Close">{@render ic(p('M3 3L15 15M15 3L3 15', 'none', '#777'), 18, 16)}</button>
      </header>
      <div class="backmenu"><span>File</span><i class="tri"></i><b>{@render ic(status.lock, 20, 20)}</b></div>
      <div class="backtools">
        <svg width="18" height="1000" viewBox="0 53 18 1000" aria-hidden="true">
          {@html p('M0 78H18M0 144H18M0 1007H18', 'none', '#2c2c2c', 2) + r(12, 80, 6, 62, '#2f2f2f') + r(4, 307, 14, 36, '#4c7ea0') + p('M18 207Q8 212 10 222M18 243Q9 245 10 252Q12 258 18 260', 'none', '#3b9aa8', 2) + p('M8 288L12 284V292Z', '#3b9aa8') + r(16, 282, 2, 13, '#aaa') + p('M18 310Q8 316 8 325Q8 334 18 340M18 314Q11 318 11 325Q11 332 18 336', 'none', '#3b9aa8', 1.5) + p('M12 325L18 319V331Z', '#bbb') + p('M18 350H11V363', 'none', '#3b9aa8', 1.5) + r(10, 363, 8, 11, '#bbb') + r(4, 459, 14, 2, '#999') + r(8.5, 470.5, 10, 27, '#aaa', '#ccc') + p('M13 484L18 480V488Z', '#333') + r(8.5, 507.5, 10, 12, 'none', '#bbb') + r(8.500, 522.500, 10, 12, 'none', '#bbb') + r(8.500, 544.500, 10, 27, 'none', '#bbb') + p('M11 514H17M14 510V517M11 528H17M14 525V532M11 558H17M14 554V562', 'none', '#bbb') + r(4, 577, 14, 36, '#4c7ea0') + r(8.500, 581.500, 10, 27, 'none', '#222') + r(13, 584, 4, 4, '#ccc') + p('M6 970L11 970L18 988V994L6 998Z', '#25a19e') + p('M6 970L11 970L18 988Z', '#8fdad4')}
        </svg>
      </div>
    </section>

    <section class="browser" aria-label="Browser window behind">
      <header><button aria-label="Close browser">{@render ic(p('M3 3L15 15M15 3L3 15', 'none', '#9a9cb0'), 18, 14)}</button></header>
      <div class="bar"><i></i><button aria-label="Browser menu"><s></s><s></s><s></s></button></div>
      <div class="web">
        <div class="content">
          <div class="photo"></div>
          <div class="blank"></div>
          <div class="lightbox">
            {@render ic(p('M2 2L22 22M22 2L2 22', 'none', '#666', 1.4), 24, 22)}
            <button aria-label="Next picture">{@render ic(p('M5 1L19 12L5 23', 'none', '#aaa', 1.6), 24, 24)}</button>
          </div>
          <div class="foot"></div>
        </div>
        <div class="vbar">
          {@render ic(p('M4 10L8 5L12 10', 'none', '#444', 2), 16, 14)}
          <i></i>
          {@render ic(p('M4 5L8 10L12 5', 'none', '#444', 2), 16, 14)}
        </div>
      </div>
    </section>

    <main class="maya">
      <header class="title">
        {@render ic(mLogo + t(17, 36, 8, '#2a8f8c', 'MAYA'), 36, 16)}
        <h1>Autodesk Maya 2018 - Educational Version: C:\Users\10500967\Downloads\01-lamp_IKFK_rig.ma*   ---   Transform_Ctrl_Grp</h1>
        <button aria-label="Minimize">{@render ic(p('M3 9H13', 'none', '#222', 1.4), 16, 14)}</button>
        <button aria-label="Restore down">{@render ic(r(3, 5, 8, 8, 'none', '#222') + p('M6 5V3H13V11H11', 'none', '#222'), 16, 14)}</button>
        <button aria-label="Close window">{@render ic(p('M3 3L13 13M13 3L3 13', 'none', '#222', 1.2), 16, 14)}</button>
      </header>

      <nav class="menubar">
        {@render menu(menus)}
        <label class="workspace"><span>Workspace :</span>
          <select><option>Maya Classic*</option></select><i class="tri"></i>
        </label>
        <button class="lock" aria-label="Lock workspace">{@render ic(status.lock, 20, 18)}</button>
      </nav>

      <div class="statusline">
        <i class="grip"></i>
        <select class="mode" aria-label="Menu set"><option>Rigging</option></select><i class="tri"></i>
        <div class="run">
          {@render btns(['sep', 'file', 'open', 'save', 'undo', 'redo', 'end', 'sep', 'selH', 'selO', 'selC', 'end', 'sep', 'mGrid', 'mCurve', 'mPoint', 'mProj', 'mPlane', 'mLive'], status, 20, 20)}
        </div>
        <i class="tri dimtri"></i>
        <button class="wide">No Live Surface</button>
        <div class="run">{@render btns(['sep'], status, 20, 20)}</div>
        <i class="tri dimtri"></i>
        <button class="wide sym">Symmetry: Off</button>
        <div class="run">
          {@render btns(['sep', 'in', 'out', 'hist', 'sep', 'rEye', 'rPic', 'rIpr', 'rSet', 'rHyp', 'rLayer', 'rLight', 'pause', 'end', 'sep', 'user'], status, 20, 20)}
        </div>
        <button class="sign">Sign In</button><i class="tri"></i>
        <div class="run right">{@render btns(['wModel', 'wHuman', 'wChar', 'wTool', 'wLayer'], status, 20, 20)}</div>
      </div>

      <div class="shelf">
        <i class="grip"></i>
        <div class="shelfside">
          <button aria-label="Shelf tabs">{@render ic(p('M2 6H14M2 10H14', 'none', M, 2), 16, 14)}</button>
          <button aria-label="Shelf options">{@render ic(c(8, 8, 4, 'none', G, 2) + p('M8 1V4M8 12V15M1 8H4M12 8H15M3 3L5 5M13 3L11 5M3 13L5 11M13 13L11 11', 'none', G, 1.6), 16, 14)}</button>
        </div>
        <div class="shelfmain">
          <div class="tabs">
            {#each shelves as s}<button class:active={s === 'Poly Modeling'}>{s}</button>{/each}
          </div>
          <div class="icons">
            {#each shelfGroups as g, i}
              {#if i}<span class="bar"></span>{/if}
              {#each g as n}<button aria-label={n}>{@render ic(shelf[n], 28, 27)}</button>{/each}
            {/each}
            <span class="shelfscroll"><i class="tri uptri"></i><b></b><i class="tri"></i></span>
          </div>
        </div>
      </div>

      <div class="work">
        <div class="toolbox">
          <i class="hgrip"></i>
          {@render btns(['select', 'lasso', 'paint', 'move', 'rotate', 'scale'], tools, 34, 34)}
          <hr />
          {@render btns(['one', 'four', 'two', 'outl'], tools, 34, 34)}
          <span class="brand">{@render ic(mLogo, 34, 34)}</span>
        </div>

        <section class="outliner">
          <div class="ptabs"><button>Outliner</button></div>
          <div class="frame">
            <nav>{@render menu(['Display', 'Show', 'Help'])}</nav>
            <div class="search">
              {@render ic(`<rect x="2" y="2" width="12" height="12" fill="none" stroke="#7a7e7a" stroke-width="1.4" stroke-dasharray="3 2"/>`, 16, 14)}
              <label><input placeholder="Search..." aria-label="Search outliner" /><i class="tri"></i></label>
            </div>
            <div class="treewrap">
              <ul>
                {#each rows as [d, , kind, name, state], i}
                  <li class={state}>
                    <svg class="gut" width={44 + Math.round(d * 11.5)} height="19" aria-hidden="true">{@html gutter(i)}</svg>
                    {@render ic(kinds[kind], 16, 15)}
                    <span>{name}</span>
                  </li>
                {/each}
              </ul>
              <div class="vscroll"><i class="tri uptri"></i><b></b><i class="tri"></i></div>
            </div>
            <div class="hscroll"><i class="tri left"></i><b></b><i class="tri rightt"></i></div>
            <i class="hgrip mid"></i>
          </div>
        </section>

        <section class="viewport">
          <nav>{@render menu(['View', 'Shading', 'Lighting', 'Show', 'Renderer', 'Panels'])}</nav>
          <div class="picons">
            {@render btns(['sep', ...panelRow], panel, 16, 16)}
            <input aria-label="Exposure" value="0.00" />
            {@render btns(['contrast'], panel, 16, 16)}
            <input aria-label="Gamma" value="1.00" />
            {@render btns(['on'], panel, 16, 17)}
            <select aria-label="View transform"><option>sRGB gamma</option></select><i class="tri"></i>
          </div>
          <svg class="scene" viewBox="377 197 1212 685" aria-label="Lamp rig">
            <g fill="none" stroke="#5fdcab" stroke-width="1">
              <ellipse cx="958" cy="651" rx="248" ry="62" transform="rotate(-.5 958 651)" />
              <ellipse cx="958" cy="642" rx="146" ry="36" />
            </g>
            <g fill="none" stroke="#1c1f70" stroke-width="1">
              <ellipse cx="946" cy="296" rx="43" ry="24" transform="rotate(-39 946 296)" />
              <ellipse cx="1059" cy="444" rx="45" ry="30" transform="rotate(-37 1059 444)" />
              <ellipse cx="959" cy="598" rx="53" ry="23" transform="rotate(33 959 598)" />
            </g>
            <g fill="none" stroke="#e312dc" stroke-width="1">
              <circle cx="946" cy="296" r="7" /><circle cx="946" cy="296" r="5" /><path d="M940 292L948 289L952 297L946 303L939 299Z" />
              <path d="M950 301L1052 442M951 301L1054 445M950 300L1061 436M951 302L1064 440M1054 435L1064 441M1052 442L1058 438" />
              <circle cx="1059" cy="444" r="6" /><circle cx="1059" cy="444" r="4" /><path d="M1054 441L1060 438L1065 445L1059 450L1053 448Z" />
              <path d="M1056 449L961 586M1055 451L968 596M961 586L956 594M968 596L960 600" />
              <circle cx="958" cy="599" r="6" /><circle cx="958" cy="599" r="4" />
              <circle cx="958" cy="638" r="6" /><path d="M952 638H965M958 631V645" />
            </g>
            <g fill="none" stroke="#7b35a8"><ellipse cx="958" cy="638" rx="10" ry="14" /><path d="M946 638L952 634V642ZM971 638L965 634V642Z" /></g>
            <path d="M974 594L985 592V608L974 611Z" fill="#4a4fb0" fill-opacity=".7" stroke="#3a3fc8" />
            <path d="M977 603L991 605V620L978 618Z" fill="#a85050" fill-opacity=".8" stroke="#e03030" />
            <path d="M958.500 620V597" stroke="#14e814" fill="none" /><path d="M958.500 575L963 597H954Z" fill="#14ff14" />
            <path d="M972 634L983 631" stroke="#e81414" /><path d="M999 626L983 627V632L987 634Z" fill="#ff1a10" />
            <path d="M973 641L990 644" stroke="#1414b8" /><path d="M1009 648L990 641V649Z" fill="#1a1aff" />
            <rect x="949" y="628" width="19" height="19" fill="none" stroke="#f0e818" stroke-width="1.5" />
            <path d="M580 698V723L585 719L590 730L594 728L590 717H597Z" fill="#e80c0c" stroke="#4a0808" />
            <path d="M406 840V853" stroke="#14e814" stroke-width="1.500" /><path d="M406 852L413 850" stroke="#c01818" stroke-width="2" /><path d="M406 853L412 856" stroke="#1a1aff" stroke-width="2" /><path d="M410 846L415 853M415 846L410 853" stroke="#d02828" />
            <text x="403" y="837" fill="#14d814" font-size="10">y</text>
            <text x="973" y="870" fill="#f2f5f2" font-size="10" font-weight="700" text-anchor="middle">2D Pan/Zoom : persp</text>
          </svg>
        </section>

        <aside class="dock">
          <div class="dockmain">
            <div class="cbicons">
              {#each ['cbMove', 'cbRot', 'cbGraph'] as n}<button aria-label={n}>{@render ic(misc[n], 20, 16)}</button>{/each}
            </div>
            <nav>{@render menu(['Channels', 'Edit', 'Object', 'Show'])}</nav>
            <h2>Transform_Ctrl_Grp</h2>
            <table>
              <tbody>
                {#each attrs as [k, v]}
                  <tr><th scope="row">{k}</th><td><input aria-label={k} value={v} /></td></tr>
                {/each}
              </tbody>
            </table>
            <div class="empty"></div>
            <i class="hgrip mid"></i>
            <div class="layers">
              <div class="ptabs"><button class="active">Display</button><button class="off">Anim</button></div>
              <nav>{@render menu(['Layers', 'Options', 'Help'])}</nav>
              <div class="lbtns">
                {#each ['lUp', 'lDown', 'lNew', 'lSel'] as n}<button aria-label={n}>{@render ic(misc[n], 20, 16)}</button>{/each}
              </div>
              <div class="llist">
                <div class="lrow"><button aria-label="Visibility"></button><button>P</button><button aria-label="Display type"></button>
                  {@render ic(r(0, 0, 16, 16, D) + p('M1 13L15 0', 'none', '#e8ece8', 1.2) + p('M15.500 0V14', 'none', G), 16, 15)}
                  <span>geo_layer</span></div>
                <div class="hscroll"><i class="tri left"></i><b></b><i class="tri rightt"></i></div>
              </div>
            </div>
          </div>
          <div class="vtabs"><button class="active">Channel Box / Layer Editor</button><button>Modeling Toolkit</button><button>Attribute Editor</button></div>
        </aside>
      </div>

      <div class="timeline">
        <i class="grip"></i>
        <div class="ruler">
          <div class="now">1</div>
          {#each ticks as f}<span style="left: {((f - 1) / 120) * 100}%">{f}</span>{/each}
        </div>
        <input aria-label="Current frame" value="1" />
        <div class="run">
          {#each Object.keys(play) as n}<button aria-label={n}>{@render ic(play[n], 20, 18)}</button>{/each}
        </div>
      </div>

      <div class="range">
        <i class="grip"></i>
        <input aria-label="Animation start" value="1" />
        <input aria-label="Playback start" value="1" />
        <div class="track"><div class="thumb" style="width: {((120 - 1) / (200 - 1)) * 100}%"><button aria-label="Range start"></button><span>1</span><span class="rend">120</span><button aria-label="Range end"></button></div></div>
        <input aria-label="Playback end" value="120" />
        <input class="lastin" aria-label="Animation end" value="200" />
        <span class="sep">{@render ic(status.sep, 20, 20)}</span>
        <i class="tri dimtri"></i><button class="cs">No Character Set</button>
        <i class="tri dimtri"></i><button class="al">No Anim Layer</button>
        <span class="sep">{@render ic(status.sep, 20, 20)}</span>
        <select aria-label="Frame rate"><option>24 fps</option></select><i class="tri"></i>
        <button class="rb lp" aria-label="Loop">{@render ic(misc.loop, 20, 18)}</button>
        <span class="sep">{@render ic(status.sep, 20, 20)}</span>
        <button class="rb" aria-label="Auto keyframe">{@render ic(misc.auto, 20, 18)}</button>
        <button class="rb" aria-label="Preferences">{@render ic(misc.run, 20, 20)}</button>
      </div>

      <div class="command">
        <i class="grip"></i>
        <label for="mel">MEL</label><input id="mel" />
        <i class="grip one"></i>
        <output>// Result: Lamp_Base_FK_Ctrl_Grp</output>
        <button aria-label="Script editor">{@render ic(misc.script, 20, 20)}</button>
      </div>

      <div class="help"><i class="grip"></i><p>Move Tool: Use manipulator to move object(s). Ctrl+MMB+drag to move components along normals. Shift+drag manipulator axis or plane handles to extrude components or clone objects. Ctrl+Shift+LMB+drag to constrain movement to a connected edge. Use D or INSERT to change the pivot position and axis orientation.</p></div>

      <div class="rtask">
        <div class="rinner">
          <button class="start" aria-label="Start">{@render ic(task.win, 24, 18)}</button>
          <label class="tsearch"><i></i><input placeholder="Type here to search" aria-label="Search remote" />{@render ic(task.mic, 24, 22)}</label>
          {#each remoteApps as n}<button class="app" class:hot={n === 'maya'} aria-label={n}>{@render ic(task[n], 24, 24)}</button>{/each}
          <div class="tray">
            <button class="t1" aria-label="People">{@render ic(task.people, 24, 20)}</button>
            <button aria-label="Hidden icons">{@render ic(task.up, 24, 20)}</button>
            <button aria-label="Network">{@render ic(task.net, 24, 20)}</button>
            <button aria-label="Muted">{@render ic(task.mute, 24, 20)}</button>
            <button aria-label="Pen">{@render ic(task.pen, 24, 20)}</button>
            <time>3:25 PM<br />4/11/2019</time>
            <button class="nt" aria-label="Notifications">{@render ic(task.notifOn, 24, 24)}</button>
          </div>
        </div>
      </div>
    </main>
  </div>

  <footer class="htask">
    <button class="start" aria-label="Start menu">{@render ic(task.win, 24, 18)}</button>
    <label class="tsearch"><i></i><input placeholder="Type here to search" aria-label="Search" />{@render ic(task.mic, 24, 22)}</label>
    {#each hostApps as [n, s]}<button class="app" class:open={s} class:hot={s === 2} aria-label={n}>{@render ic(task[n], 24, 24)}</button>{/each}
    <div class="tray">
      <button class="t1" aria-label="People bar">{@render ic(task.people, 24, 20)}</button>
      <button aria-label="Show hidden icons">{@render ic(task.up, 24, 20)}</button>
      <button aria-label="Network status">{@render ic(task.net, 24, 20)}</button>
      <button aria-label="Volume">{@render ic(task.vol, 24, 20)}</button>
      <button aria-label="Ink">{@render ic(task.pen, 24, 20)}</button>
      <time>3:25 PM<br />4/11/2019</time>
      <button class="nt" aria-label="Action center">{@render ic(task.notif, 24, 24)}</button>
    </div>
  </footer>
</div>

<style>
  :global(body) { margin: 0; background: #2b2b2b; }
  .screen { --bg: #585c58; --dk: #373b37; --tx: #d3d8d3; --blue: #5a9dba; display: flex; flex-direction: column; height: 100vh; min-height: 720px; overflow: hidden; font: 11px/15px 'Open Sans', 'Noto Sans', sans-serif; color: var(--tx); }
  .screen :global(svg) { display: block; flex: none; }
  button, input, select { font: inherit; color: inherit; background: none; border: 0; padding: 0; margin: 0; border-radius: 0; box-sizing: border-box; appearance: none; outline: 0; text-align: left; white-space: nowrap; }
  input { min-width: 0; }
  h1, h2, p, ul { margin: 0; padding: 0; font: inherit; }
  i { flex: none; }
  .tri { width: 0; height: 0; border: 5px solid transparent; border-top: 5px solid #b9bdb9; border-bottom: 0; }
  .dimtri { border-top-color: #90948f; border-left-width: 4px; border-right-width: 4px; }
  .uptri { border-top: 0; border-bottom: 5px solid #d8dcd8; }
  .left { border: 4px solid transparent; border-right: 6px solid #d8dcd8; border-left: 0; }
  .rightt { border: 4px solid transparent; border-left: 6px solid #d8dcd8; border-right: 0; }
  .grip { width: 6px; align-self: stretch; margin: 3px 4px 3px 3px; background: radial-gradient(circle, #8c908c 1px, transparent 1px) 0 0 / 3px 3px; }
  .grip.one { width: 3px; margin: 6px 2px; }
  .hgrip { display: block; height: 3px; background: radial-gradient(circle, #8c908c 1px, transparent 1px) 0 0 / 3px 3px; }
  nav { display: flex; align-items: center; gap: 15px; }

  .desktop { position: relative; flex: 1; min-height: 0; background: #3b3b3b; overflow: hidden; }
  .backwin { position: absolute; inset: 0; background: #444; color: #aaa; }
  .backwin header { display: flex; align-items: center; height: 23px; padding: 0 14px 5px 2px; box-sizing: border-box; background: linear-gradient(#f4f4f4, #e2e2e2 50%, #fff); color: #999; gap: 8px; }
  .backwin .name { flex: 1; white-space: nowrap; font-size: 12px; padding-top: 5px; }
  .backwin header button { width: 38px; display: flex; justify-content: center; }
  .backmenu { display: flex; align-items: center; height: 30px; padding-left: 9px; background: #444; font-size: 12px; }
  .backmenu .tri { margin-left: auto; margin-right: 8px; border-top-color: #bbb; }
  .backmenu b { width: 22px; height: 22px; margin-right: 3px; border: 1px solid #24d824; box-sizing: border-box; }
  .browser { position: absolute; top: 52px; right: 6px; bottom: 7px; width: 420px; display: flex; flex-direction: column; background: #fff; }
  .browser header { display: flex; justify-content: flex-end; align-items: center; height: 33px; padding-right: 15px; background: #1d2142; }
  .browser .bar { display: flex; justify-content: flex-end; align-items: center; height: 41px; border-bottom: 1px solid #ccc; padding-right: 12px; gap: 20px; }
  .browser .bar i { width: 16px; height: 12px; border: 2px solid #555; border-radius: 2px; margin-right: 13px; }
  .browser .bar button { display: grid; gap: 3px; width: 12px; }
  .browser .bar s { height: 2px; background: #333; }
  .web { flex: 1; display: flex; min-height: 0; }
  .content { flex: 1; display: flex; flex-direction: column; }
  .photo { height: 117px; width: 380px; background: #7c7c7e; }
  .blank { height: 66px; }
  .lightbox { flex: 1; background: #232323; padding-top: 20px; }
  .lightbox :global(svg) { margin-left: auto; margin-right: 22px; }
  .lightbox button { display: flex; align-items: center; width: 31px; height: 77px; margin: 247px 0 0 auto; background: #3a3a3b; }
  .lightbox button :global(svg) { margin: 0 auto; }
  .foot { height: 55px; width: 380px; margin-top: 12px; background: #b5b5ab; }
  .vbar { width: 16px; background: #f0f0f0; display: flex; flex-direction: column; align-items: center; padding: 3px 0 0; }
  .vbar i { width: 16px; height: 55px; margin: 257px 0 auto; background: #cdcdcd; }

  .maya { position: absolute; top: 10px; left: 17px; right: 61px; bottom: 0; display: flex; flex-direction: column; background: var(--bg); border: 1px solid #1c80d4; border-bottom: 0; box-shadow: 0 0 12px rgba(0, 0, 0, .4); font-family: Roboto, 'Open Sans', sans-serif; }
  .maya > * { flex: none; box-sizing: border-box; }
  .title { display: flex; align-items: center; height: 29px; background: #fafdfa; color: #161816; padding: 4px 3px 0 2px; font-family: 'Open Sans', sans-serif; }
  .title h1 { flex: 1; margin-left: 4px; white-space: pre; }
  .title button { width: 43px; display: flex; justify-content: center; }
  .menubar { height: 19px; padding-left: 9px; border-top: 1px solid var(--dk); }
  .workspace { display: flex; align-items: center; margin: 7px 0 0 auto; }
  .workspace span { color: #b4b8b4; margin-right: 11px; }
  .workspace select { width: 167px; }
  .lock { margin: 5px 3px 0 -6px; }

  .statusline { display: flex; align-items: center; height: 34px; padding-top: 3px; border-bottom: 2px solid var(--dk); }
  .mode { width: 78px; margin-left: 3px; }
  .run { display: flex; align-items: center; }
  .run button { width: 22px; height: 22px; display: flex; align-items: center; justify-content: center; }
  .on { background: var(--blue); }
  .sep { width: 22px; display: flex; justify-content: center; flex: none; overflow: hidden; }
  .statusline > .tri { margin-right: 3px; }
  .statusline > .dimtri { margin: 0 6px 0 7px; }
  .wide { width: 91px; margin-left: 2px; }
  .wide.sym { margin-left: 0; width: 90px; }
  .sign { width: 76px; margin-left: 2px; font-weight: 600; color: #fff; }
  .run.right { margin: 0 3px 0 auto; }

  .shelf { display: flex; height: 65px; padding-top: 2px; border-bottom: 2px solid var(--dk); }
  .shelf > .grip { margin-top: 0; }
  .shelfside { width: 20px; margin-bottom: 2px; background: var(--dk); display: flex; flex-direction: column; align-items: center; justify-content: space-between; padding: 7px 0; box-sizing: border-box; }
  .shelfmain { flex: 1; min-width: 0; margin: 1px 4px 0 2px; }
  .tabs { display: flex; align-items: flex-end; height: 18px; background: var(--dk); color: #a4a8a4; }
  .tabs button { padding: 0 11px 1px 12px; height: 18px; }
  .tabs .active { background: var(--bg); color: #f2f5f2; font-weight: 600; padding-left: 10px; padding-right: 10px; border-radius: 2px 2px 0 0; }
  .icons { display: flex; align-items: center; height: 38px; padding-left: 4px; }
  .icons button { width: 34px; display: flex; justify-content: center; }
  .icons .bar { width: 2px; height: 34px; margin: 0 4px 0 3px; background: #9a9e9a; }
  .shelfscroll { margin: 0 4px 0 auto; width: 12px; height: 34px; background: var(--dk); display: flex; flex-direction: column; align-items: center; justify-content: space-around; }
  .shelfscroll b { width: 10px; height: 10px; border-radius: 5px; background: #585c58; }

  .maya > .work { flex: 1; display: flex; min-height: 0; }
  .toolbox { width: 43px; display: flex; flex-direction: column; align-items: center; }
  .toolbox .hgrip { width: 36px; margin: 3px 0 5px; }
  .toolbox button { width: 34px; height: 35px; display: flex; align-items: center; justify-content: center; flex: none; }
  .toolbox hr { width: 34px; height: 2px; border: 0; background: #a4a8a4; margin: 75px 0 5px; flex: none; }
  .brand { margin: auto 0 4px; }

  .outliner { width: 316px; box-sizing: border-box; display: flex; flex-direction: column; background: var(--dk); padding: 2px 3px 3px; }
  .ptabs { display: flex; height: 16px; background: var(--dk); flex: none; }
  .ptabs button { padding: 0 10px; background: var(--bg); color: #f0f3f0; font-weight: 600; border-radius: 2px 2px 0 0; }
  .ptabs .off { background: none; color: #a0a4a0; font-weight: 400; margin-left: 2px; }
  .frame { flex: 1; min-height: 0; display: flex; flex-direction: column; border: 1px solid #9a9e9a; background: var(--bg); padding: 0 1px; }
  .frame nav { height: 17px; padding-left: 7px; }
  .search { display: flex; align-items: center; height: 26px; padding: 3px 3px 0 5px; gap: 7px; box-sizing: border-box; }
  .search label { flex: 1; display: flex; align-items: center; height: 17px; background: #3a3e3a; padding: 0 5px 0 3px; border-radius: 2px; }
  .search input { flex: 1; }
  .search input::placeholder { color: #949894; opacity: 1; }
  .treewrap { flex: 1; display: flex; min-height: 0; background: var(--dk); }
  .treewrap ul { flex: 1; min-width: 0; list-style: none; overflow: hidden; }
  .treewrap li { display: flex; align-items: center; height: 19px; white-space: nowrap; }
  .treewrap li span { margin-left: 4px; }
  .hover { background: #555955; color: #c4c8c4; }
  .sel { background: var(--blue); color: #fff; }
  .dim { color: #747974; }
  .vscroll { width: 12px; display: flex; flex-direction: column; align-items: center; padding: 3px 0; box-sizing: border-box; }
  .vscroll b { flex: 0 0 66%; width: 10px; margin: 69px 0 auto; background: #5c605c; border-radius: 3px; }
  .hscroll { display: flex; align-items: center; height: 12px; background: var(--dk); padding: 0 4px 0 3px; flex: none; }
  .hscroll b { width: 83%; max-width: 244px; height: 10px; margin: 0 auto 0 4px; background: #5c605c; border-radius: 3px; }
  .frame .hscroll { padding-right: 15px; }
  .mid { align-self: center; width: 102px; margin: 2px auto; }

  .viewport { flex: 1; min-width: 0; display: flex; flex-direction: column; padding-top: 4px; }
  .viewport nav { height: 17px; padding-left: 12px; flex: none; }
  .picons { display: flex; align-items: center; height: 18px; padding-left: 3px; flex: none; }
  .picons button { width: 18px; height: 18px; display: flex; align-items: center; justify-content: center; flex: none; }
  .picons .sep { width: 12px; }
  .picons .gap { width: 19px; }
  .picons input { width: 35px; height: 13px; background: #373b37; padding-left: 5px; margin: 0 2px 0 3px; line-height: 13px; }
  .picons select { width: 112px; margin-left: 6px; }
  .scene { flex: 1; min-height: 0; width: 100%; }

  .dock { width: 269px; box-sizing: border-box; border-left: 2px solid var(--dk); display: flex; }
  .dockmain { flex: 1; min-width: 0; display: flex; flex-direction: column; padding: 0 2px 3px 4px; }
  .cbicons { display: flex; justify-content: flex-end; gap: 4px; padding: 2px 3px 0 0; height: 21px; }
  .dock nav { padding-left: 7px; height: 16px; flex: none; }
  .dock h2 { font-weight: 700; color: #c8ccc8; padding: 3px 0 1px 1px; }
  table { border-collapse: collapse; width: 100%; }
  th, td { padding: 0; height: 15px; line-height: 14px; }
  th { text-align: right; font-weight: 400; color: #c0c4c0; padding-right: 6px; }
  td { width: 73px; }
  td input { display: block; width: 71px; height: 14px; background: var(--dk); padding-left: 9px; color: #f0f3f0; line-height: 14px; }
  .empty { height: 226px; margin: 17px 0 0; background: var(--dk); width: 243px; }
  .layers { flex: 1; min-height: 0; margin-top: 5px; border: 1px solid #414541; display: flex; flex-direction: column; }
  .layers .ptabs button { min-width: 56px; }
  .layers nav { height: 21px; padding-left: 9px; }
  .lbtns { display: flex; justify-content: flex-end; gap: 7px; padding: 1px 7px 7px 0; }
  .llist { flex: 1; margin: 0 3px 3px; background: var(--dk); display: flex; flex-direction: column; justify-content: space-between; }
  .llist .hscroll b { max-width: 147px; }
  .lrow { display: flex; align-items: center; height: 19px; padding-left: 3px; gap: 3px; background: var(--blue); color: #16222a; }
  .lrow button { width: 19px; height: 14px; border: 1px solid #38708e; border-radius: 3px; text-align: center; line-height: 12px; color: #31607a; }
  .vtabs { width: 16px; background: var(--dk); display: flex; flex-direction: column; padding-top: 2px; }
  .vtabs button { writing-mode: vertical-rl; width: 15px; line-height: 15px; color: #a4a8a4; padding: 10px 0; margin-bottom: 6px; }
  .vtabs .active { background: var(--bg); color: #e4e8e4; }

  .timeline { display: flex; align-items: center; height: 38px; border-top: 2px solid var(--dk); }
  .ruler { flex: 1; position: relative; height: 28px; border-left: 8px solid var(--dk); border-right: 7px solid var(--dk); background: var(--dk); }
  .ruler span { position: absolute; top: 0; bottom: 0; line-height: 12px; padding-left: 1px; color: #7e827e; font-size: 11px; }
  .ruler span::before { content: ''; position: absolute; left: 0; bottom: 0; width: 1px; height: 16px; background: #a0a4a0; }
  .now { width: 11px; height: 28px; background: #5a5e5a; color: #fff; box-sizing: border-box; padding: 14px 0 0 2px; }
  .timeline input { width: 84px; height: 17px; margin: 0 7px 0 7px; background: var(--dk); border-radius: 2px; padding-left: 6px; }
  .timeline .run { margin-right: 9px; }

  .range { display: flex; align-items: center; height: 34px; border-top: 2px solid var(--dk); }
  .range input { width: 84px; height: 24px; margin-right: 8px; background: var(--dk); border-radius: 2px; padding-left: 5px; flex: none; }
  .range input.lastin { margin-right: 1px; }
  .track { flex: 1; height: 24px; background: var(--dk); padding: 0 5px; margin-right: 7px; display: flex; align-items: center; }
  .thumb { height: 19px; background: #5a5e5a; border-radius: 4px; display: flex; align-items: center; padding: 0 3px; gap: 4px; box-sizing: content-box; }
  .thumb button { width: 14px; height: 14px; border-radius: 4px; background: #a0a4a0; }
  .rend { margin-left: auto; }
  .range .sep { width: 10px; }
  .range > .dimtri { margin: 0 13px 0 9px; }
  .cs { width: 96px; }
  .al { width: 95px; }
  .range select { width: 73px; margin-left: 10px; }
  .range .rb { width: 28px; display: flex; justify-content: center; }
  .range .lp { margin-right: 5px; }
  .range select + .tri { margin-right: 11px; }
  .range .rb:last-child { margin-right: 6px; }

  .command { display: flex; align-items: center; height: 32px; border-top: 2px solid var(--dk); }
  .command label { width: 34px; margin-left: 10px; }
  .command input { flex: 638; height: 22px; background: var(--dk); border-radius: 2px; }
  .command output { flex: 1104; height: 23px; background: var(--dk); line-height: 23px; padding-left: 7px; box-sizing: border-box; }
  .command button { margin: 0 7px 0 5px; }
  .help { display: flex; align-items: center; height: 23px; border-top: 2px solid var(--dk); color: #b0b4b0; }
  .help p { margin-left: 10px; font-size: 10px; white-space: nowrap; }

  .rtask { height: 31px; background: #191c38; overflow: hidden; color: #fff; font-family: 'Open Sans', sans-serif; }
  .rinner { display: flex; align-items: center; height: 38px; }
  .start { width: 46px; height: 38px; display: flex; align-items: center; justify-content: center; }
  .tsearch { display: flex; align-items: center; width: 330px; height: 38px; background: #fafdfa; color: #444; box-sizing: border-box; padding: 0 9px; border-top: 1px solid #ccc; }
  .tsearch i { width: 14px; height: 14px; border: 3px solid #1a1a1a; border-radius: 50%; }
  .tsearch input { flex: 1; margin-left: 9px; font-size: 14px; }
  .tsearch input::placeholder { color: #4a4a4a; opacity: 1; }
  .app { width: 47px; height: 38px; display: flex; align-items: center; justify-content: center; flex: none; }
  .rtask .hot { background: #4a5a5e; }
  .tray { margin-left: auto; display: flex; align-items: center; }
  .tray button { width: 24px; display: flex; justify-content: center; }
  .tray .t1 { margin-right: 12px; }
  time { font-size: 12px; line-height: 17px; text-align: center; margin: 0 4px 0 5px; }
  .tray .nt { width: 50px; }
  .htask { flex: none; height: 40px; display: flex; align-items: center; background: linear-gradient(90deg, #08080a, #0c0c0d 55%, #2b2c2e 75%, #2b2c2e); color: #fff; }
  .htask .start { width: 48px; }
  .htask .tsearch { width: 344px; height: 40px; background: #f1f1f1; }
  .htask .tsearch input { font-size: 15px; }
  .htask .app { width: 49px; height: 40px; position: relative; }
  .htask .open::after { content: ''; position: absolute; left: 4px; right: 4px; bottom: 0; height: 3px; background: #76b9ed; }
  .htask .hot { background: #3f4042; }
  .htask .tray button { width: 25px; }
  .htask time { font-size: 12px; line-height: 18px; margin: 0 1px 0 5px; }
  .htask .tray .nt { width: 52px; margin-right: 7px; }
</style>
